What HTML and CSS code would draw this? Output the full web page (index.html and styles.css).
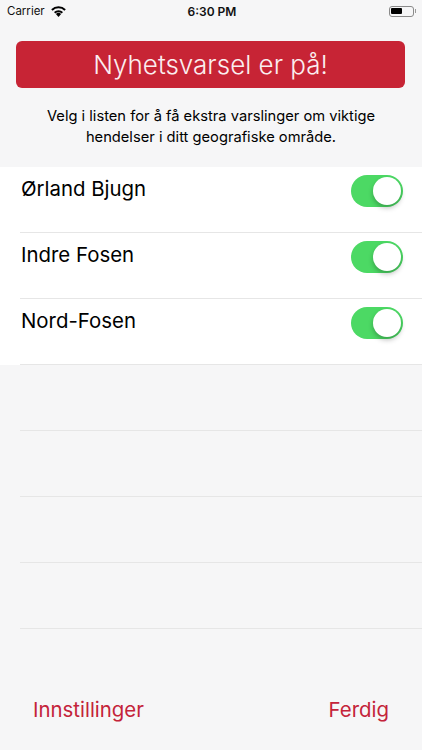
FILE: index.html
```html
<!DOCTYPE html>
<html lang="nb">
<head>
<meta charset="utf-8">
<title>Nyhetsvarsel</title>
<link rel="stylesheet" href="styles.css">
</head>
<body>
<div class="screen">
  <header class="status">
    <div class="status-left">
      <span>Carrier</span>
      <svg class="wifi" width="15" height="11" viewBox="0 0 15 11"><path d="M7.5 11 4.9 8.1a3.7 3.7 0 0 1 5.2 0Z" fill="#000"/><path d="M3 6.1a6.4 6.4 0 0 1 9 0l-1.3 1.4a4.5 4.5 0 0 0-6.4 0Z" fill="#000"/><path d="M.2 3.2a10.3 10.3 0 0 1 14.6 0l-1.4 1.5a8.3 8.3 0 0 0-11.8 0Z" fill="#000"/></svg>
    </div>
    <div class="status-time">6:30 PM</div>
    <div class="status-right">
      <span class="battery"><span class="battery-fill"></span></span><span class="battery-tip"></span>
    </div>
  </header>

  <button class="banner" type="button">Nyhetsvarsel er på!</button>
  <p class="intro">Velg i listen for å få ekstra varslinger om viktige hendelser i ditt geografiske område.</p>

  <ul class="list">
    <li class="row on"><span class="name">Ørland Bjugn</span><span class="switch"><span class="knob"></span></span></li>
    <li class="row on"><span class="name">Indre Fosen</span><span class="switch"><span class="knob"></span></span></li>
    <li class="row on"><span class="name">Nord-Fosen</span><span class="switch"><span class="knob"></span></span></li>
    <li class="row"></li>
    <li class="row"></li>
    <li class="row"></li>
    <li class="row"></li>
  </ul>

  <footer class="actions">
    <span>Innstillinger</span>
    <span>Ferdig</span>
  </footer>
</div>
</body>
</html>
```
FILE: styles.css
```css
* { box-sizing: border-box; }
html, body { margin: 0; padding: 0; }
body {
  width: 422px;
  height: 750px;
  overflow: hidden;
  background: #f6f6f7;
  font-family: Inter, "Liberation Sans", sans-serif;
  color: #000;
}
.screen {
  display: flex;
  flex-direction: column;
  height: 750px;
}
.status {
  display: grid;
  grid-template-columns: 1fr auto 1fr;
  align-items: center;
  height: 22px;
  padding: 0 6px 0 7px;
  font-size: 11.5px;
  color: #111;
}
.status-left {
  display: flex;
  align-items: center;
  gap: 6px;
}
.status-time {
  font-weight: 600;
  font-size: 12px;
  padding-left: 1px;
}
.status-right {
  display: flex;
  justify-content: flex-end;
  align-items: center;
}
.battery {
  display: block;
  width: 25px;
  height: 11px;
  padding: 1.5px;
  border: 1px solid #8a8a8a;
  border-radius: 3px;
}
.battery-fill {
  display: block;
  width: 11px;
  height: 100%;
  background: #000;
  border-radius: 1px;
}
.battery-tip {
  display: block;
  width: 1.5px;
  height: 4px;
  margin-left: 1px;
  background: #9a9a9a;
}
.banner {
  display: block;
  width: 389px;
  height: 47px;
  margin: 19px 0 0 16px;
  padding: 0;
  border: 0;
  border-radius: 6px;
  background: #c72435;
  color: #fbeef0;
  font-family: inherit;
  font-size: 26px;
  font-weight: 300;
  text-align: center;
}
.intro {
  margin: 18px 30px 0;
  font-size: 14.7px;
  line-height: 21px;
  text-align: center;
}
.list {
  list-style: none;
  margin: 19px 0 0;
  padding: 0;
}
.row {
  position: relative;
  display: flex;
  justify-content: space-between;
  align-items: flex-start;
  height: 66px;
  padding: 8px 19px 0 21px;
}
.row::after {
  content: "";
  position: absolute;
  left: 20px;
  right: 0;
  bottom: 0;
  height: 1px;
  background: #e6e6e6;
}
.row.on { background: #fff; }
.name {
  font-size: 20.4px;
  font-weight: 400;
  line-height: 26px;
  margin-top: 1px;
}
.switch {
  position: relative;
  display: block;
  width: 52px;
  height: 32px;
  border-radius: 16px;
  background: #4cd964;
}
.knob {
  position: absolute;
  top: 2px;
  right: 2px;
  width: 28px;
  height: 28px;
  border-radius: 50%;
  background: #fff;
  box-shadow: 0 3px 5px rgba(0,0,0,.25);
}
.actions {
  display: flex;
  justify-content: space-between;
  align-items: center;
  margin-top: auto;
  height: 40px;
  margin-bottom: 21px;
  padding: 0 33px;
  color: #c4233a;
  font-size: 20.4px;
}
```
